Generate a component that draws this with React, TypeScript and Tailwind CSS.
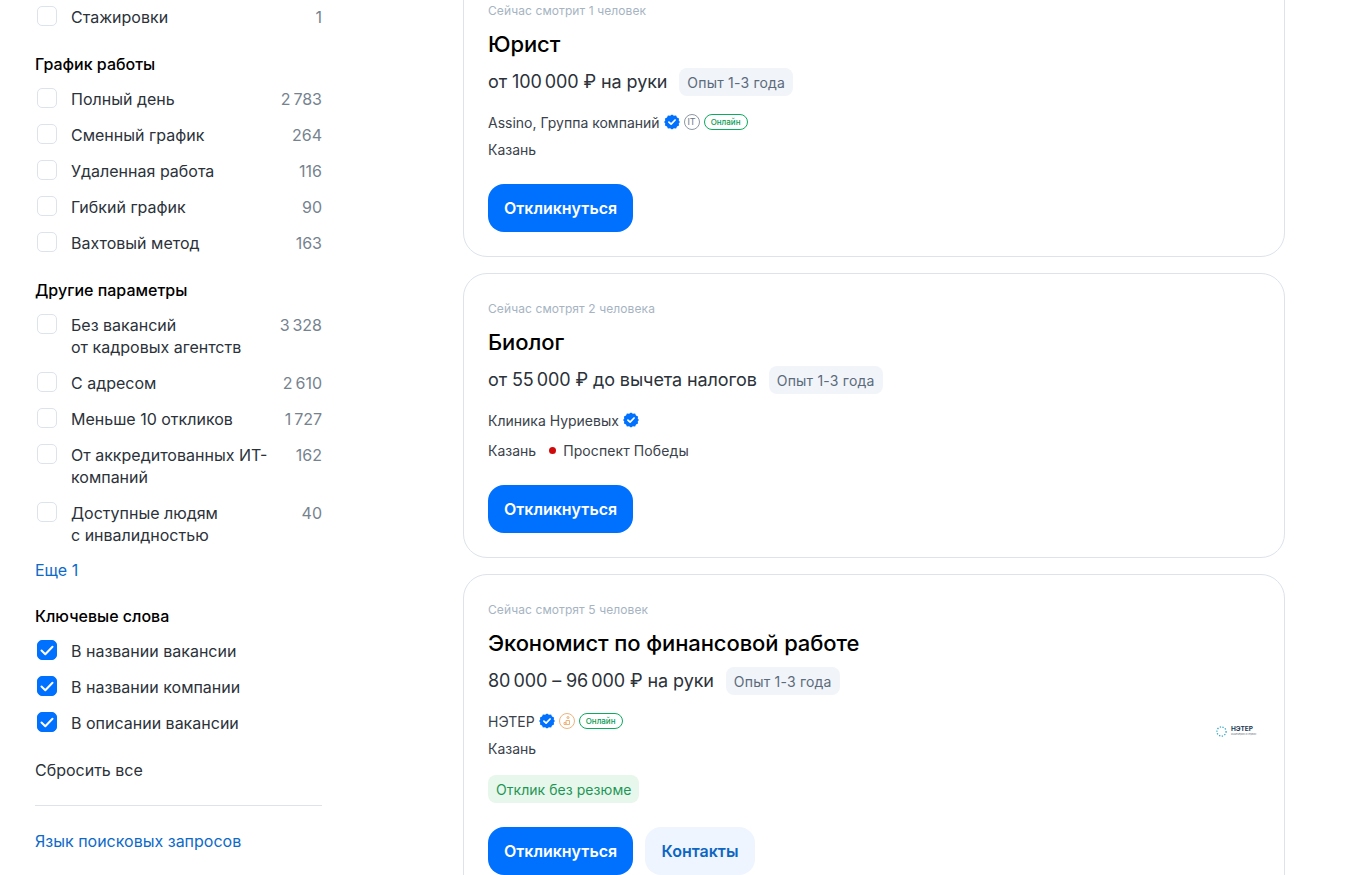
import React from "react";

const Check = ({ on }: { on?: boolean }) => (
  <span className={"ml-[2px] flex h-5 w-5 shrink-0 items-center justify-center rounded-[5px] border " + (on ? "border-[#0070ff] bg-[#0070ff]" : "border-[#dce3eb] bg-white")}>
    {on && (
      <svg width="14" height="11" viewBox="0 0 14 11" fill="none">
        <path d="M1.5 5.5 5.3 9.2 12.5 1.8" stroke="#fff" strokeWidth="2" strokeLinecap="round" strokeLinejoin="round" />
      </svg>
    )}
  </span>
);

const Row = ({ label, count, on }: { label: React.ReactNode; count?: string; on?: boolean }) => (
  <div className="flex items-start text-[16px] leading-[22px] text-[#2b323a]">
    <Check on={on} />
    <span className="ml-[14px] flex-1">{label}</span>
    {count && <span className="ml-2 text-[#76838f]">{count}</span>}
  </div>
);

const Title = ({ children }: { children: React.ReactNode }) => (
  <div className="mb-[13px] mt-[25px] text-[16px] font-medium leading-[22px] text-black">{children}</div>
);

const Verified = () => (
  <svg width="16" height="16" viewBox="0 0 16 16" className="shrink-0">
    <path
      d="M8 .6l1.9 1.2 2.2-.2.9 2 2 .9-.2 2.2L16 8l-1.2 1.3.2 2.2-2 .9-.9 2-2.2-.2L8 15.4l-1.9-1.2-2.2.2-.9-2-2-.9.2-2.2L0 8l1.2-1.3L1 4.5l2-.9.9-2 2.2.2z"
      fill="#0070ff"
    />
    <path d="M4.9 8.1 7.1 10.2 11.1 6" fill="none" stroke="#fff" strokeWidth="1.7" strokeLinecap="round" strokeLinejoin="round" />
  </svg>
);

const Online = () => (
  <span className="flex h-4 w-11 items-center justify-center rounded-full border border-[#0dab5e] text-[8px] font-medium text-[#0a9c55]">Онлайн</span>
);

const Card = ({
  views,
  title,
  salary,
  exp,
  company,
  metro,
  extra,
  contacts,
  logo,
  className,
}: {
  views: string;
  title: string;
  salary: string;
  exp: string;
  company: React.ReactNode;
  metro?: string;
  extra?: boolean;
  contacts?: boolean;
  logo?: boolean;
  className?: string;
}) => (
  <div className={"relative rounded-[24px] border border-[#dce3eb] bg-white px-6 pb-6 pt-[25px] " + (className ?? "")}>
    <div className="text-[12px] leading-[20px] tracking-[0.1px] text-[#a6b4c2]">{views}</div>
    <div className="mt-2 text-[22px] font-medium leading-[30px] tracking-[-0.1px] text-black">{title}</div>
    <div className="mt-2 flex h-7 items-center">
      <span className="text-[18px] tracking-[-0.1px] text-[#2b323a]">{salary}</span>
      <span className="ml-3 mt-[2px] flex h-7 items-center rounded-lg bg-[#f1f4f9] px-2 text-[14px] tracking-[0.2px] text-[#5b6b7b]">{exp}</span>
    </div>
    <div className="mt-[17px] flex h-5 items-center gap-1 text-[14px] text-[#3a424b]">{company}</div>
    <div className={"flex h-5 items-center text-[14px] text-[#3a424b] " + (metro ? "mt-[10px]" : "mt-[7px]")}>
      Казань
      {metro && (
        <>
          <span className="ml-[13px] mr-[7px] h-[7px] w-[7px] rounded-full bg-[#d00a0a]" />
          <span className="tracking-[0.1px]">{metro}</span>
        </>
      )}
    </div>
    {extra && (
      <div className="mt-[17px] flex h-7 w-fit items-center rounded-lg bg-[#e8f7ec] px-2 text-[14px] tracking-[0.05px] text-[#1d9655]">Отклик без резюме</div>
    )}
    <div className={"flex gap-3 " + (extra ? "mt-6" : "mt-[25px]")}>
      <button className="h-12 w-[145px] rounded-2xl bg-[#0070ff] text-[16px] font-semibold text-white">Откликнуться</button>
      {contacts && <button className="h-12 w-[110px] rounded-2xl bg-[#eff5fe] text-[16px] font-semibold text-[#0d66c2]">Контакты</button>}
    </div>
    {logo && (
      <div className="absolute right-[28px] top-[146px] flex h-5 w-10 items-center gap-1">
        <svg width="11" height="11" viewBox="0 0 12 12" className="shrink-0">
          <circle cx="6" cy="6" r="5" fill="none" stroke="#35a7c4" strokeWidth="1.4" strokeDasharray="1.4 1.6" />
        </svg>
        <span className="flex flex-col whitespace-nowrap">
          <span className="text-[6.5px] font-bold leading-[7px] text-[#1d3a55]">НЭТЕР</span>
          <span className="text-[2.5px] leading-[3px] text-[#6a7885]">инженерия и сервис</span>
        </span>
      </div>
    )}
  </div>
);

export default function App() {
  return (
    <div className="flex h-[875px] overflow-hidden bg-white pl-[35px] [font-family:Inter,'Noto_Sans',sans-serif]">
      <aside className="w-[287px] shrink-0 pt-[6px]">
        <Row label="Стажировки" count="1" />
        <Title>График работы</Title>
        <div className="flex flex-col gap-[14px]">
          <Row label="Полный день" count={"2\u2009783"} />
          <Row label="Сменный график" count="264" />
          <Row label="Удаленная работа" count="116" />
          <Row label="Гибкий график" count="90" />
          <Row label="Вахтовый метод" count="163" />
        </div>
        <Title>Другие параметры</Title>
        <div className="flex flex-col gap-[14px]">
          <Row label={<>Без вакансий<br />от кадровых агентств</>} count={"3\u2009328"} />
          <Row label="С адресом" count={"2\u2009610"} />
          <Row label="Меньше 10 откликов" count={"1\u2009727"} />
          <Row label={<>От аккредитованных ИТ-<br />компаний</>} count="162" />
          <Row label={<>Доступные людям<br />с инвалидностью</>} count="40" />
        </div>
        <div className="mb-[-1px] mt-[13px] text-[16px] leading-[22px] text-[#0d6ac9]">Еще 1</div>
        <Title>Ключевые слова</Title>
        <div className="flex flex-col gap-[14px]">
          <Row label="В названии вакансии" on />
          <Row label="В названии компании" on />
          <Row label="В описании вакансии" on />
        </div>
        <div className="mt-[25px] text-[16px] leading-[22px] text-[#2b323a]">Сбросить все</div>
        <div className="mt-6 h-px bg-[#dce3eb]" />
        <div className="mt-6 text-[16px] leading-[22px] text-[#0d6ac9]">Язык поисковых запросов</div>
      </aside>
      <main className="ml-[141px] flex w-[822px] shrink-0 flex-col gap-4">
        <Card
          className="-mt-[25px]"
          views="Сейчас смотрит 1 человек"
          title="Юрист"
          salary={"от 100\u2009000 ₽ на руки"}
          exp="Опыт 1-3 года"
          company={
            <>
              Assino, Группа компаний
              <Verified />
              <span className="flex h-4 w-4 items-center justify-center rounded-full border border-[#8b97a3] text-[9px] text-[#6a7885]">IT</span>
              <Online />
            </>
          }
        />
        <Card
          views="Сейчас смотрят 2 человека"
          title="Биолог"
          salary={"от 55\u2009000 ₽ до вычета налогов"}
          exp="Опыт 1-3 года"
          metro="Проспект Победы"
          company={
            <>
              Клиника Нуриевых
              <Verified />
            </>
          }
        />
        <Card
          views="Сейчас смотрят 5 человек"
          title="Экономист по финансовой работе"
          salary={"80\u2009000 – 96\u2009000 ₽ на руки"}
          exp="Опыт 1-3 года"
          extra
          contacts
          logo
          company={
            <>
              НЭТЕР
              <Verified />
              <svg width="16" height="16" viewBox="0 0 16 16" fill="none" stroke="#eeb47c">
                <circle cx="8" cy="8" r="7.5" />
                <path d="M5 11.5V9.5h2v2zM7 11.5V7.5h3.5v4zM9 5.5a1 1 0 1 0-.01 0" strokeWidth="1" />
              </svg>
              <Online />
            </>
          }
        />
      </main>
    </div>
  );
}
